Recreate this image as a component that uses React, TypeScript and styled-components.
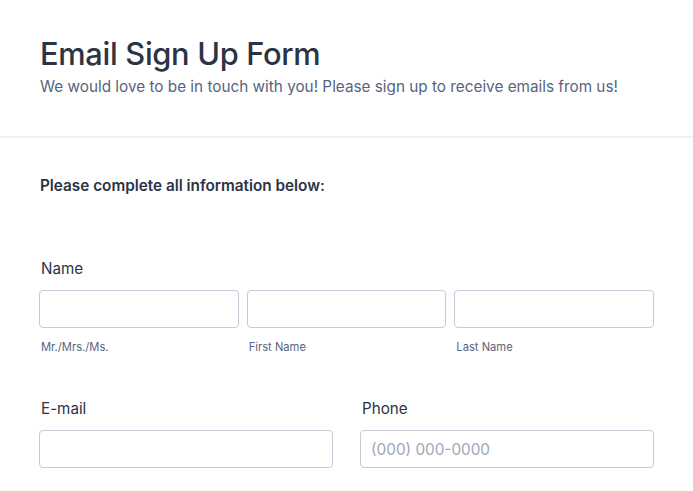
import styled, { createGlobalStyle } from 'styled-components';

const GlobalStyle = createGlobalStyle`
  * { box-sizing: border-box; }
  body {
    margin: 0;
    background: #fff;
    font-family: Inter, "Noto Sans", sans-serif;
    color: #2c3345;
  }
`;

export default function App() {
  return (
    <>
      <GlobalStyle />
      <Page>
        <Header>
          <Title>Email Sign Up Form</Title>
          <Subtitle>We would love to be in touch with you! Please sign up to receive emails from us!</Subtitle>
        </Header>
        <Body>
          <Intro>Please complete all information below:</Intro>
          <Field>
            <Label>Name</Label>
            <Row $cols={3}>
              <Part>
                <Input />
                <SubLabel>Mr./Mrs./Ms.</SubLabel>
              </Part>
              <Part>
                <Input />
                <SubLabel>First Name</SubLabel>
              </Part>
              <Part>
                <Input />
                <SubLabel>Last Name</SubLabel>
              </Part>
            </Row>
          </Field>
          <Row $cols={2} $gap={27}>
            <Field>
              <Label>E-mail</Label>
              <Input />
            </Field>
            <Field>
              <Label>Phone</Label>
              <Input placeholder="(000) 000-0000" />
            </Field>
          </Row>
        </Body>
      </Page>
    </>
  );
}

const Page = styled.div`
  width: 693px;
  height: 491px;
  overflow: hidden;
`;

const Header = styled.header`
  padding: 36px 40px 0;
  height: 138px;
  border-bottom: 2px solid #f0f0f6;
`;

const Title = styled.h1`
  margin: 0;
  font-size: 30.8px;
  font-weight: 500;
  line-height: 36px;
  letter-spacing: -0.01em;
`;

const Subtitle = styled.p`
  margin: 5px 0 0;
  font-size: 15.3px;
  line-height: 20px;
  color: #57647e;
`;

const Body = styled.div`
  padding: 38px 39px 0;
  width: 655px;
  box-sizing: content-box;
`;

const Intro = styled.p`
  margin: 0 0 63px 1px;
  font-size: 15.3px;
  font-weight: 600;
  line-height: 20px;
`;

const Field = styled.div`
  display: flex;
  flex-direction: column;
  margin-bottom: 45px;
`;

const Row = styled.div<{ $cols: number; $gap?: number }>`
  display: grid;
  grid-template-columns: repeat(${p => p.$cols}, 1fr);
  column-gap: ${p => p.$gap ?? 8}px;
  width: 615px;
`;

const Part = styled.div`
  display: flex;
  flex-direction: column;
`;

const Label = styled.label`
  margin: 0 0 11px 2px;
  font-size: 15.2px;
  line-height: 20px;
  color: #2c3345;
`;

const Input = styled.input`
  height: 38px;
  width: 100%;
  border: 1px solid #c8cad9;
  border-radius: 4px;
  padding: 0 10px;
  font-family: Inter, "Noto Sans", sans-serif;
  font-size: 15.3px;
  color: #2c3345;
  background: #fff;

  &::placeholder {
    color: #a0a5ba;
  }
`;

const SubLabel = styled.span`
  margin: 12px 0 0 2px;
  font-size: 11.2px;
  line-height: 14px;
  color: #57647e;
`;
